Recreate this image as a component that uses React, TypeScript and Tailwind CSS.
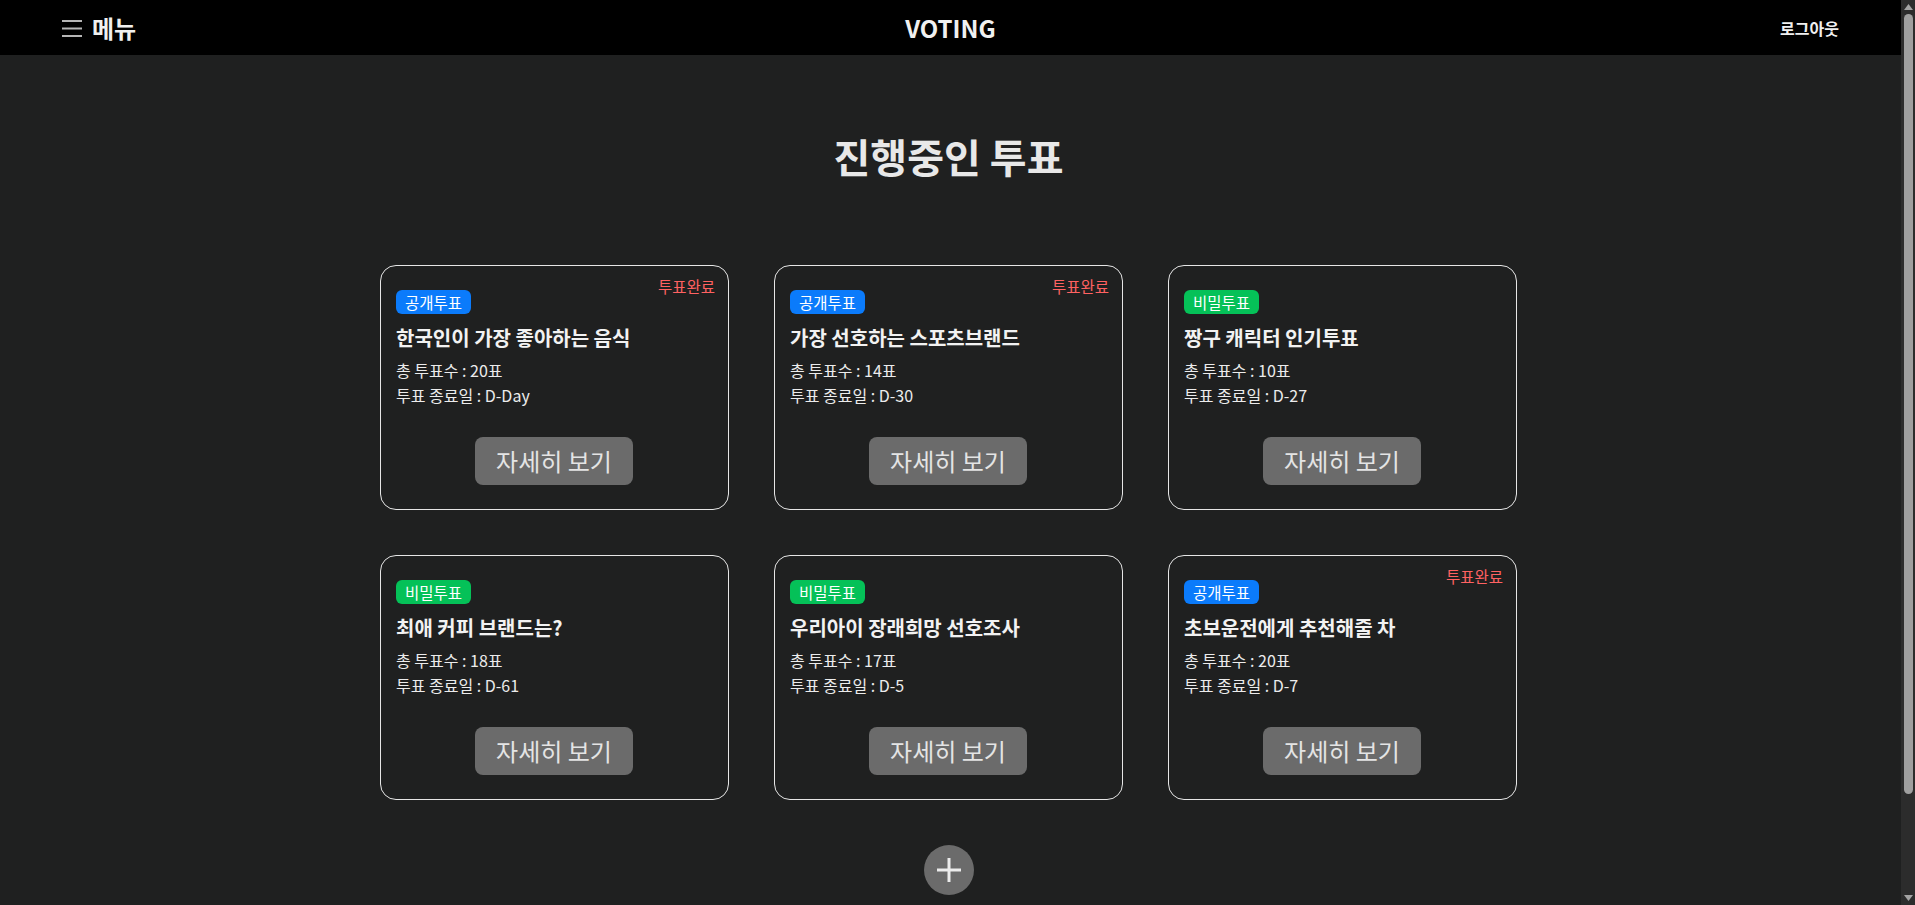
import React from "react";

type Vote = {
  type: "공개투표" | "비밀투표";
  title: string;
  total: number;
  dday: string;
  done: boolean;
};

const votes: Vote[] = [
  { type: "공개투표", title: "한국인이 가장 좋아하는 음식", total: 20, dday: "D-Day", done: true },
  { type: "공개투표", title: "가장 선호하는 스포츠브랜드", total: 14, dday: "D-30", done: true },
  { type: "비밀투표", title: "짱구 캐릭터 인기투표", total: 10, dday: "D-27", done: false },
  { type: "비밀투표", title: "최애 커피 브랜드는?", total: 18, dday: "D-61", done: false },
  { type: "비밀투표", title: "우리아이 장래희망 선호조사", total: 17, dday: "D-5", done: false },
  { type: "공개투표", title: "초보운전에게 추천해줄 차", total: 20, dday: "D-7", done: true },
];

const font = { fontFamily: '"Noto Sans CJK KR", "Noto Sans", sans-serif' };

function Card({ v }: { v: Vote }) {
  return (
    <div className="relative flex h-[245px] flex-col rounded-[16px] border border-[#e6e6e6] pt-[24px] pr-4 pb-[24px] pl-[15px]">
      {v.done && (
        <span className="absolute top-[9px] right-[13px] text-[15.5px] leading-[22px] text-[#ff6262]">투표완료</span>
      )}
      <div className="flex">
        <span
          className={
            "rounded-[6px] px-[9px] text-[15.5px] leading-[24px] text-white " +
            (v.type === "공개투표" ? "bg-[#0b7bfb]" : "bg-[#05c158]")
          }
        >
          {v.type}
        </span>
      </div>
      <div className="mt-[10px] text-[20px] leading-[28px] font-bold text-[#f2f2f2]">{v.title}</div>
      <div className="mt-[6px] text-[16px] leading-[25px] text-[#ececec]">총 투표수 : {v.total}표</div>
      <div className="text-[16px] leading-[25px] text-[#ececec]">투표 종료일 : {v.dday}</div>
      <div className="mt-auto flex justify-center">
        <button className="h-[48px] w-[158px] rounded-[8px] bg-[#6b6b6b] text-[24px] text-[#e4e4e4]">자세히 보기</button>
      </div>
    </div>
  );
}

function FakeScrollbar() {
  return (
    <div className="flex h-screen w-[14px] shrink-0 flex-col items-center bg-[#2c2c2c]">
      <div className="flex h-[14px] w-full items-center justify-center">
        <svg width="9" height="6" viewBox="0 0 9 6">
          <polygon points="4.5,0 9,6 0,6" fill="#a3a3a3" />
        </svg>
      </div>
      <div className="h-[780px] w-[9px] rounded-full bg-[#9f9f9f]" />
      <div className="flex-1" />
      <div className="flex h-[14px] w-full items-center justify-center">
        <svg width="9" height="6" viewBox="0 0 9 6">
          <polygon points="0,0 9,0 4.5,6" fill="#a3a3a3" />
        </svg>
      </div>
    </div>
  );
}

export default function App() {
  return (
    <div className="flex h-screen overflow-hidden bg-[#1f2020]" style={font}>
      <div className="h-screen min-w-0 flex-1 overflow-y-auto [scrollbar-width:none]">
        <header className="flex h-[55px] items-center justify-between bg-black px-[62px]">
          <div className="flex w-[200px] items-center gap-[10px]">
            <svg width="20" height="18" viewBox="0 0 20 18" className="text-[#b5b5b5]">
              <rect x="0" y="1" width="20" height="2" fill="currentColor" />
              <rect x="0" y="8.5" width="20" height="2" fill="currentColor" />
              <rect x="0" y="16" width="20" height="2" fill="currentColor" />
            </svg>
            <span className="text-[24px] leading-[30px] font-bold text-[#f0f0f0]">메뉴</span>
          </div>
          <div className="text-[24px] font-bold text-[#f0f0f0]">VOTING</div>
          <div className="flex w-[200px] justify-end">
            <span className="text-[16px] font-bold text-[#f0f0f0]">로그아웃</span>
          </div>
        </header>
        <main className="flex flex-col items-center pt-[74px] pr-[4px] pb-[125px]">
          <h1 className="text-[40px] leading-[54px] font-bold text-[#e8e8e8]">진행중인 투표</h1>
          <div className="mt-[82px] grid grid-cols-[repeat(3,349px)] gap-[45px]">
            {votes.map((v, i) => (
              <Card key={i} v={v} />
            ))}
          </div>
          <button className="mt-[45px] flex h-[50px] w-[50px] items-center justify-center rounded-full bg-[#6b6b6b]">
            <svg width="24" height="24" viewBox="0 0 24 24">
              <rect x="0" y="10.5" width="24" height="3" fill="#ececec" />
              <rect x="10.5" y="0" width="3" height="24" fill="#ececec" />
            </svg>
          </button>
        </main>
      </div>
      <FakeScrollbar />
    </div>
  );
}
